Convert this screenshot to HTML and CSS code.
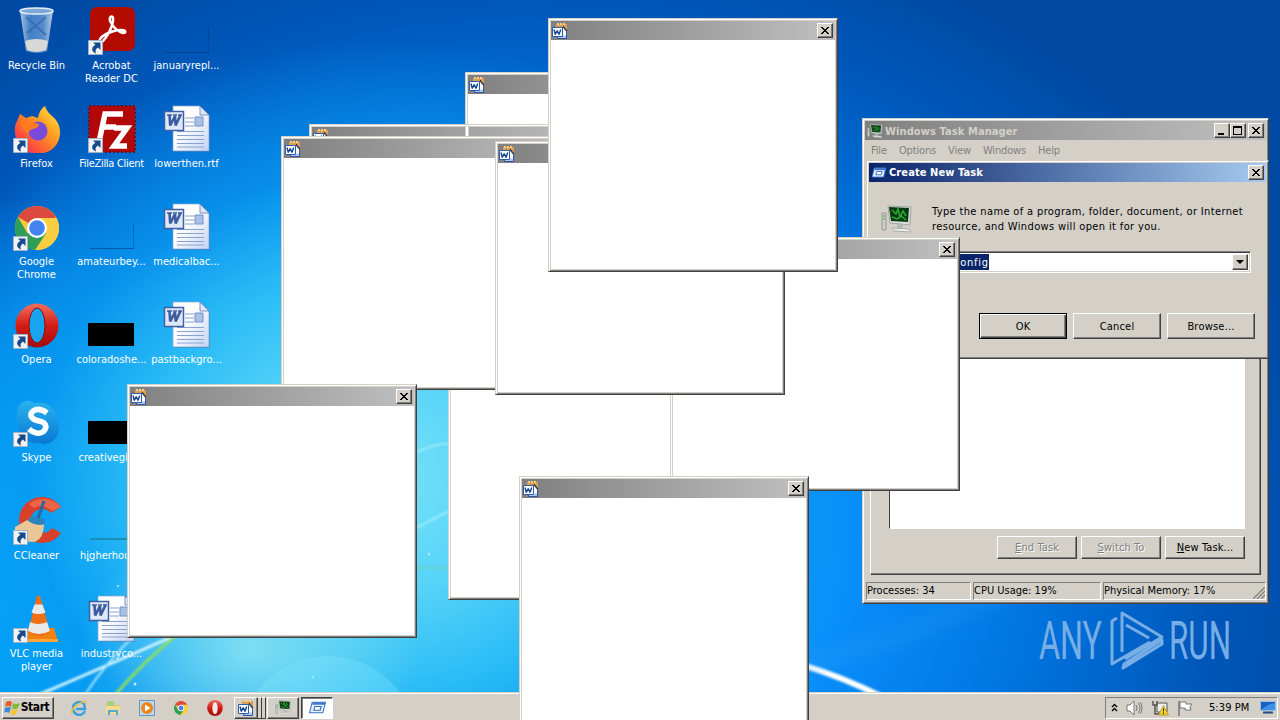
FILE: index.html
```html
<!DOCTYPE html>
<html lang="en">
<head>
    <meta charset="UTF-8">
    <meta name="viewport" content="width=device-width, initial-scale=1.0">
    <title>Desktop</title>
    <link rel="stylesheet" href="styles.css">
</head>
<body>
    <!-- shared icons -->
    <svg class="sprites">
        <defs>
            <linearGradient id="g-red" x1="0" y1="0" x2="0" y2="1"><stop offset="0" stop-color="#f2705c"/><stop offset=".5" stop-color="#d51c16"/><stop offset="1" stop-color="#a30c0c"/></linearGradient>
            <linearGradient id="g-fox" x1="1" y1="0" x2="0" y2="1"><stop offset="0" stop-color="#fff04a"/><stop offset=".4" stop-color="#ff9a1f"/><stop offset=".75" stop-color="#ff4a3d"/><stop offset="1" stop-color="#e8208a"/></linearGradient>
            <linearGradient id="g-page" x1="0" y1="0" x2="1" y2="1"><stop offset=".4" stop-color="#fff"/><stop offset="1" stop-color="#c3d3f3"/></linearGradient>
            <linearGradient id="g-bin" x1="0" y1="0" x2="1" y2="0"><stop offset="0" stop-color="#b9cfe8"/><stop offset=".3" stop-color="#4b86c9"/><stop offset=".7" stop-color="#5c93d0"/><stop offset="1" stop-color="#c8d9ea"/></linearGradient>
            <linearGradient id="g-sky" x1="0" y1="0" x2="0" y2="1"><stop offset="0" stop-color="#29b2ee"/><stop offset="1" stop-color="#0a78d4"/></linearGradient>
        </defs>
        <symbol id="shortcut" viewBox="0 0 15 15">
            <path d="M.5.5h14v14H.5z" fill="#f2f2f2" stroke="#9fb3c8"/>
            <path d="M5 2.500h7.500v7.500l-2.500-2.400c-2.500 1.500-3 3.200-2 5.900-4.500-1.500-5.500-5.800-.6-8.700z" fill="#174a8c"/>
        </symbol>
        <symbol id="doc" viewBox="0 0 48 48">
            <path d="M11 2h27l9 9v36H11z" fill="#24588f" opacity=".4"/>
            <path d="M10 1h27l9 9v36H10z" fill="url(#g-page)" stroke="#8ba4cf" stroke-width=".7"/>
            <path d="M37 1v9h9z" fill="#dde7f7" stroke="#5f7fb3" stroke-width=".8"/>
            <path d="M22 13h9M22 17h9M22 21h9M14 26.500h27M14 30.500h27M14 34.500h27M14 38.500h27M14 42h27" stroke="#8aa2d2"/>
            <path d="M32 12h8v9h-8z" fill="#a9bfe6" stroke="#7892c8"/>
            <path d="M1.500 6.500h19v19h-19z" fill="#dfe8f8" stroke="#3e5fa5" stroke-width="1.500"/>
            <path d="M4 10h5M10 10h4M15 10h4" stroke="#3d5b9f" stroke-width="1.500"/>
            <path d="M6.500 10l.7 10.500L12 11l.6 9.500L17.500 10" fill="none" stroke="#3d5b9f" stroke-width="2.600" stroke-linejoin="bevel"/>
        </symbol>
        <symbol id="word" viewBox="0 0 16 16">
            <path d="M4 1h11v13H4z" fill="#d9a055"/><path d="M5 0h2v2H5zM8 0h2v2H8zM11 0h2v2h-2z" fill="#f7cf86"/>
            <path d="M5.500 4.500h6l3 4v7h-9z" fill="#a9c6ef" stroke="#3054a0"/>
            <path d="M11 3l4 5" stroke="#1b1b1b"/>
            <path d="M.5 4.500h10v9H.5z" fill="#fff" stroke="#2f5cab"/>
            <path d="M2 6.500L3.300 11.500 5.200 7.500 7 11.500 8.700 6.500" fill="none" stroke="#16458f" stroke-width="1.400" stroke-linejoin="bevel"/>
            <path d="M11 5.500l3 3v4h-3z" fill="#fff"/>
        </symbol>
        <symbol id="close" viewBox="0 0 8 7"><path d="M0 0h2v1h1v1h2V1h1V0h2v1H7v1H6v1H5v1h1v1h1v1h1v1H6V6H5V5H3v1H2v1H0V6h1V5h1V4h1V3H2V2H1V1H0z" fill="#000"/></symbol>
        <symbol id="chrome" viewBox="0 0 44 44">
            <circle cx="22" cy="22" r="22" fill="#f8cb3e"/>
            <path d="M22 22L3 11a22 22 0 0 1 38 0z" fill="#db4a3c"/>
            <path d="M22 22l-9.500 5.500L3 11a22 22 0 0 0 17 33l11.500-17z" fill="#2e9e58"/>
            <path d="M22 12h19.500a22 22 0 0 1-21 32l11-17z" fill="#fbce42"/>
            <circle cx="22" cy="22" r="10" fill="#fff"/><circle cx="22" cy="22" r="7.800" fill="#4484ee"/>
        </symbol>
        <symbol id="opera" viewBox="0 0 44 44"><ellipse cx="22" cy="22" rx="21.500" ry="22" fill="url(#g-red)"/><ellipse cx="22" cy="22" rx="8" ry="17.500" class="opera-hole" stroke="#8b0d0d"/></symbol>
        <symbol id="computer" viewBox="0 0 32 28">
            <path d="M1 8h4v17H1z" fill="#c9cec9" stroke="#959a95"/><path d="M2 11h2M2 14h2" stroke="#4a4"/>
            <path d="M7 1l23 1-1 18-20-2z" fill="#d9ddd9" stroke="#a2a6a2"/>
            <path d="M8 2l20 1-1 14-17-1z" fill="#083b12"/>
            <path d="M11 5l4 4 2-5 2 8 3-6 3 5M11 12l5 2 4-3 5 4" fill="none" stroke="#2faa36" stroke-width="1.500"/>
            <path d="M16 19h6v4h-6z" fill="#b5bab5"/><path d="M11 23l17 1 2 3-17-1z" fill="#eceeec" stroke="#aaaeaa"/>
        </symbol>
        <symbol id="run" viewBox="0 0 16 12"><path d="M3 1h12.500L13 11H.5z" fill="#e8f1ff" stroke="#3974c8"/><path d="M3.500 1h12l-.5 2.500H3z" fill="#4078cc"/><path d="M5.500 5h6l-1 3.500h-6z" fill="#fff" stroke="#3569be"/></symbol>
    </svg>

    <div class="desktop">
        <svg class="wallpaper" viewBox="0 0 1280 720">
            <defs>
                <filter id="soft"><feGaussianBlur stdDeviation="1.300"/></filter>
                <filter id="wide"><feGaussianBlur stdDeviation="9"/></filter>
            </defs>
            <g fill="none" filter="url(#soft)">
                <path d="M36 696Q120 660 178 634" stroke="#d5f5ff" stroke-width="3"/>
                <path d="M84 696Q108 660 136 634" stroke="#a6e8fb" stroke-width="2"/>
                <path d="M115 695Q145 660 178 634" stroke="#86dd66" stroke-width="3"/>
                <path d="M800 664Q845 678 880 696" stroke="#fff" stroke-width="6"/>
                <path d="M416 452q20-9 33-8M416 528q16-8 33-17" stroke="#a9edfc" stroke-width="1.500"/>
                <path d="M416 568h33" stroke="#69d3a5" stroke-width="2" opacity=".6"/>
            </g>
            <path d="M800 665Q890 645 1010 590" stroke="#36a0fb" stroke-width="12" opacity=".35" fill="none" filter="url(#wide)"/>
            <circle cx="328" cy="745" r="89" fill="#8ae9ff" opacity=".28"/>
            <g fill="#b9f1ff"><circle cx="88" cy="560" r="1.500"/><circle cx="135" cy="684" r="1.500"/><circle cx="118" cy="586" r="1"/><circle cx="429" cy="554" r="1.200"/><circle cx="313" cy="677" r="1"/></g>
        </svg>

        <div class="icons">
            <div class="item">
                <svg class="pic" viewBox="0 0 48 48">
                    <path d="M7 4l6 40q11 4 21 0l6-40z" fill="url(#g-bin)" opacity=".9"/>
                    <ellipse cx="23.500" cy="4" rx="16.500" ry="3" fill="#7da8d6" stroke="#e3edf5" stroke-width="1.500"/>
                    <path d="M13 10l20 18M33 10L14 26" stroke="#2d5fa5" stroke-width="2" opacity=".6"/>
                    <path d="M12 34q11-4 23 0l-2 9q-10 4-19 0z" fill="#d8d9d6"/>
                </svg>
                <span>Recycle Bin</span>
            </div>
            <div class="item">
                <svg class="pic" viewBox="0 0 48 48">
                    <path d="M4 16l3-7 6 4 6-2 6 2q1-8 7-12 2 6 6 9 10 8 9 19-2 18-22 20Q4 48 2 28q-1-7 2-12z" fill="url(#g-fox)"/>
                    <circle cx="25" cy="26" r="9.500" fill="#7a4ad9"/>
                    <path d="M7 15q9 0 12 2l7 2q0 4-6 5-5 1-4 5-8-3-9-14z" fill="#ff7b20"/>
                </svg>
                <svg class="arrow"><use href="#shortcut"/></svg>
                <span>Firefox</span>
            </div>
            <div class="item">
                <svg class="pic" viewBox="0 0 48 48"><use href="#chrome" x="2" y="3" width="44" height="44"/></svg>
                <svg class="arrow"><use href="#shortcut"/></svg>
                <span>Google Chrome</span>
            </div>
            <div class="item">
                <svg class="pic" viewBox="0 0 48 48"><use href="#opera" x="2" y="2" width="44" height="45"/></svg>
                <svg class="arrow"><use href="#shortcut"/></svg>
                <span>Opera</span>
            </div>
            <div class="item">
                <svg class="pic" viewBox="0 0 48 48">
                    <path d="M12 2q6-1 9 2 20-3 23 16 5 12-2 20-7 7-15 4Q5 45 5 24 0 7 12 2z" fill="url(#g-sky)"/>
                    <path d="M34 14q-8-6-14-2c-5 5 0 9 6 10s9 5 5 10c-4 4-11 2-15-2" fill="none" stroke="#fff" stroke-width="5.500"/>
                </svg>
                <svg class="arrow"><use href="#shortcut"/></svg>
                <span>Skype</span>
            </div>
            <div class="item">
                <svg class="pic" viewBox="0 0 48 48">
                    <path d="M48 10A23 23 0 1 0 48 36l-9-5a12 12 0 1 1-1-15z" fill="#d9402a"/>
                    <path d="M48 10A23 23 0 0 0 16 7l5 4q8-5 18 3z" fill="#ec6549"/>
                    <path d="M2 30l14-8 15 5q0 14-9 18L2 44z" fill="#eac795"/>
                    <path d="M19 19l12 3 1 5q-9 3-18-4z" fill="#2c83bd"/><path d="M31 4l-6 17" stroke="#29679f" stroke-width="3"/>
                </svg>
                <svg class="arrow"><use href="#shortcut"/></svg>
                <span>CCleaner</span>
            </div>
            <div class="item">
                <svg class="pic" viewBox="0 0 48 48">
                    <path d="M13 33h28l4 14H8z" fill="#f38112"/><path d="M8 44h37v3H8z" fill="#ffa537"/>
                    <path d="M24 1h3l10 36q-10 8-22 0z" fill="#ef7014"/>
                    <path d="M21.500 9.500h8l3 8q-7 3-14 0zM17 27q8 4 17 0l3 9q-11 6-22 0z" fill="#e9e9e9"/>
                </svg>
                <svg class="arrow"><use href="#shortcut"/></svg>
                <span>VLC media player</span>
            </div>

            <div class="item">
                <svg class="pic" viewBox="0 0 48 48">
                    <rect x="2" width="45" height="44" rx="7" fill="#b30b00"/>
                    <path d="M12 32c5-7 22-11 25-8 2 4-9 2-15-10-1-5 4-7 3 0-1 8-7 17-10 20-2 2-4 0-3-2z" fill="none" stroke="#fff" stroke-width="2.500"/>
                </svg>
                <svg class="arrow"><use href="#shortcut"/></svg>
                <span>Acrobat Reader DC</span>
            </div>
            <div class="item">
                <svg class="pic" viewBox="0 0 48 48">
                    <path d="M1 1h46v46H1z" fill="#b30808" stroke="#7f0a14" stroke-width="2" stroke-dasharray="2 2"/>
                    <path d="M11 37l6-28h18M15 22h13M26 23h13L26 41h13" fill="none" stroke="#fff" stroke-width="5.500"/>
                </svg>
                <svg class="arrow"><use href="#shortcut"/></svg>
                <span class="tight">FileZilla Client</span>
            </div>
            <div class="item"><div class="pic blank"></div><span>amateurbey...</span></div>
            <div class="item"><div class="pic dark"></div><span>coloradoshe...</span></div>
            <div class="item"><div class="pic dark"></div><span>creativegift...</span></div>
            <div class="item"><div class="pic line"></div><span>higherhour...</span></div>
            <div class="item"><svg class="pic"><use href="#doc"/></svg><span>industryco...</span></div>

            <div class="item"><div class="pic blank"></div><span>januaryrepl...</span></div>
            <div class="item"><svg class="pic"><use href="#doc"/></svg><span>lowerthen.rtf</span></div>
            <div class="item"><svg class="pic"><use href="#doc"/></svg><span>medicalbac...</span></div>
            <div class="item"><svg class="pic"><use href="#doc"/></svg><span>pastbackgro...</span></div>
        </div>

        <svg class="watermark" viewBox="0 0 210 66">
            <text x="0" y="51" textLength="63" lengthAdjust="spacingAndGlyphs">ANY</text>
            <text x="130" y="51" textLength="62" lengthAdjust="spacingAndGlyphs">RUN</text>
            <path d="M78 10l-5 3v43l5-3 33-19M83 44V5l40 24-37 22M87 17l23 13M84 60l39-24v-4L85 56z" fill="none"/>
        </svg>

        <div class="taskbar">
            <div class="start">
                <svg width="17" height="16" viewBox="0 0 17 16"><path d="M2 2q3-2 6 0L7 7Q4 5 1 7z" fill="#e5602b"/><path d="M9 3q3 2 7 0l-2 5q-3 2-6 0z" fill="#7fbc3b"/><path d="M1 8q3-2 6 0l-2 5q-3-2-5 0z" fill="#3c8ad7"/><path d="M8 9q3 2 6 0l-2 5q-3 2-6 0z" fill="#f7c531"/></svg>
                Start
            </div>
            <div class="quick">
                <svg viewBox="0 0 16 16"><path d="M14 11q-2 4-6 4-6-1-6-7 0-5 6-6 6 0 6 7H5" fill="none" stroke="#3a9fdc" stroke-width="2.600"/><path d="M1 14Q-1 9 8 4t7-1" fill="none" stroke="#eac34c" stroke-width="1.500"/></svg>
                <svg viewBox="0 0 16 16"><path d="M1 3h5l1 2h8v9H1z" fill="#e9c25f"/><path d="M2 1h7v5H2z" fill="#a5cf86"/><path d="M1 6h14v8H1z" fill="#f5dc8c"/><path d="M3 15v-5h10v5h-2v-3H5v3z" fill="#58a7d9"/></svg>
                <svg viewBox="0 0 16 16"><path d="M.5.5h15v15H.5z" fill="#bcd9ee" stroke="#6098c3"/><circle cx="8" cy="8" r="6" fill="#ee8519"/><path d="M6 4.500l5.500 3.500L6 11.500z" fill="#fff"/></svg>
                <svg><use href="#chrome" x="1" y="1" width="14" height="14"/></svg>
                <svg><use href="#opera"/></svg>
            </div>
            <div class="task grouped"><svg width="16" height="16"><use href="#word"/></svg></div>
            <div class="stack"><i></i><i></i></div>
            <div class="task"><svg width="17" height="15"><use href="#computer"/></svg></div>
            <div class="task active"><svg width="17" height="13"><use href="#run"/></svg></div>
            <div class="tray">
                <svg width="7" height="10" viewBox="0 0 7 10"><path d="M1 4l2.500-2.500L6 4M1 8l2.500-2.500L6 8" fill="none" stroke="#000" stroke-width="1.400"/></svg>
                <svg width="17" height="16" viewBox="0 0 17 16"><path d="M1 5h3l4-4v14l-4-4H1z" fill="#fff" stroke="#777"/><path d="M10 5q2 3 0 6M12 3q4 5 0 10M14 2q4 6 0 12" fill="none" stroke="#777"/></svg>
                <svg width="17" height="16" viewBox="0 0 17 16"><path d="M5 3h10v9H5z" fill="#eee" stroke="#555"/><path d="M1 1v4h4V1M3 5v9h5" fill="none" stroke="#555" stroke-width="1.500"/><path d="M11.500 5.500L16.500 15h-10z" fill="#f7cf22" stroke="#a88a10" stroke-width=".7"/><path d="M11.500 8.500v3M11.500 12.500v1.500" stroke="#222"/></svg>
                <svg width="16" height="16" viewBox="0 0 16 16"><path d="M2 1v15" stroke="#777" stroke-width="1.500"/><path d="M3 2h6v2h6l-2 3 1 3H8V8H3z" fill="#fff" stroke="#777"/></svg>
                <span>5:39 PM</span>
                <svg width="16" height="13" viewBox="0 0 16 13"><path d="M.5.500h15v9H.5z" fill="#175fc0" stroke="#9dbfe8"/><path d="M1 9Q7 3 15 2v7z" fill="#3b91e5"/><path d="M3 10.500h10v2H3z" fill="#244c82"/></svg>
            </div>
        </div>

        <div class="window manager">
            <div class="titlebar">
                <svg class="app" width="16" height="14"><use href="#computer"/></svg>
                <b>Windows Task Manager</b>
                <div class="btn min"></div><div class="btn max"><i></i></div><div class="btn x"><svg><use href="#close"/></svg></div>
            </div>
            <div class="menu"><span>File</span><span>Options</span><span>View</span><span>Windows</span><span>Help</span></div>
            <div class="panel">
                <div class="list"></div>
                <div class="actions">
                    <div class="button off"><u>E</u>nd Task</div>
                    <div class="button off"><u>S</u>witch To</div>
                    <div class="button"><u>N</u>ew Task...</div>
                </div>
            </div>
            <div class="status">
                <div>Processes: 34</div><div>CPU Usage: 19%</div><div>Physical Memory: 17%</div>
                <svg class="grip" viewBox="0 0 12 12"><path d="M0 12L12 0M4 12l8-8M8 12l4-4" stroke="#808080" stroke-width="1.300"/></svg>
            </div>
        </div>

        <div class="window dialog">
            <div class="titlebar">
                <svg class="app" width="16" height="11"><use href="#run"/></svg>
                <b>Create New Task</b>
                <div class="btn x"><svg><use href="#close"/></svg></div>
            </div>
            <div class="prompt">
                <svg width="32" height="28"><use href="#computer"/></svg>
                <p>Type the name of a program, folder, document, or Internet<br>resource, and Windows will open it for you.</p>
            </div>
            <div class="combo"><span>msconfig</span><div class="drop"><i></i></div></div>
            <div class="actions">
                <div class="button default">OK</div><div class="button">Cancel</div><div class="button">Browse...</div>
            </div>
        </div>

        <div class="window popup w1"><div class="titlebar"><svg class="app"><use href="#word"/></svg><div class="btn x"><svg><use href="#close"/></svg></div></div></div>
        <div class="window popup w2"><div class="titlebar"><svg class="app"><use href="#word"/></svg><div class="btn x"><svg><use href="#close"/></svg></div></div></div>
        <div class="window popup w3"><div class="titlebar"><svg class="app"><use href="#word"/></svg><div class="btn x"><svg><use href="#close"/></svg></div></div></div>
        <div class="edge"></div>
        <div class="window popup w4"><div class="titlebar"><svg class="app"><use href="#word"/></svg><div class="btn x"><svg><use href="#close"/></svg></div></div></div>
        <div class="window popup w5"><div class="titlebar"><svg class="app"><use href="#word"/></svg><div class="btn x"><svg><use href="#close"/></svg></div></div></div>
        <div class="window popup w6"><div class="titlebar"><svg class="app"><use href="#word"/></svg><div class="btn x"><svg><use href="#close"/></svg></div></div></div>
        <div class="window popup w7"><div class="titlebar"><svg class="app"><use href="#word"/></svg><div class="btn x"><svg><use href="#close"/></svg></div></div></div>
        <div class="window popup w8"><div class="titlebar"><svg class="app"><use href="#word"/></svg><div class="btn x"><svg><use href="#close"/></svg></div></div></div>
        <div class="window popup w9"><div class="titlebar"><svg class="app"><use href="#word"/></svg><div class="btn x"><svg><use href="#close"/></svg></div></div></div>
    </div>
</body>
</html>
```
FILE: styles.css
```css
* {
    box-sizing: border-box;
}

body {
    margin: 0;
    font-family: "DejaVu Sans Condensed", "DejaVu Sans", sans-serif;
    font-stretch: condensed;
    font-size: 11px;
    line-height: 13px;
    letter-spacing: -0.1px;
    color: #000;
}

svg {
    display: block;
    flex: none;
}

.sprites {
    position: absolute;
    width: 0;
    height: 0;
}

.desktop {
    position: relative;
    width: 1280px;
    height: 720px;
    overflow: hidden;
    display: flex;
    flex-direction: column;
    background:
        radial-gradient(ellipse 170px 130px at 250px 650px, rgba(160, 235, 240, 0.7), transparent),
        radial-gradient(ellipse 500px 440px at 380px 480px, #78e2f8 0%, #58d4f8 25%, #2abcf6 48%, rgba(10, 155, 240, 0.7) 70%, transparent 100%),
        radial-gradient(ellipse 300px 400px at 0 600px, #00a4fc 0%, #009cf6 40%, transparent 100%),
        radial-gradient(ellipse 820px 660px at 520px 560px, #0a98ff 0%, #0a90fc 38%, #0078e4 60%, #0058ba 84%, #004aa4 100%);
}

.wallpaper {
    position: absolute;
    width: 1280px;
    height: 720px;
}

/* desktop icons */
.icons {
    position: relative;
    flex: 1;
    display: grid;
    grid-template-columns: repeat(3, 75px);
    grid-template-rows: repeat(7, 98px);
    grid-auto-flow: column;
    margin-left: -1px;
}

.item {
    position: relative;
    display: flex;
    flex-direction: column;
    align-items: center;
    padding-top: 7px;
    color: #fff;
    text-align: center;
    letter-spacing: 0.02px;
}

.item span {
    width: 73px;
    display: flex;
    justify-content: center;
}

.item .tight {
    letter-spacing: -0.3px;
}

.pic {
    width: 48px;
    height: 48px;
    margin-bottom: 4px;
    flex: none;
}

.item .arrow {
    position: absolute;
    left: 14px;
    top: 40px;
    width: 15px;
    height: 15px;
}

.opera-hole {
    fill: var(--hole, #18a4ee);
}

.quick {
    --hole: #f5e9e6;
}

.blank {
    width: 44px;
    height: 26px;
    margin: 20px 0 6px;
    border-right: 1px solid rgba(0, 50, 110, 0.35);
    border-bottom: 1px solid rgba(0, 50, 110, 0.5);
}

.dark {
    width: 46px;
    height: 23px;
    margin: 22px 2px 7px 0;
    background: #000;
}

.line {
    width: 44px;
    height: 2px;
    margin: 41px 0 9px;
    background: #1a8fb5;
}

.watermark {
    position: absolute;
    left: 1039px;
    top: 608px;
    width: 210px;
    height: 66px;
    overflow: visible;
    fill: #78aee6;
    font: 400 53px Roboto, sans-serif;
    letter-spacing: 0;
}

.watermark path {
    stroke: #78aee6;
    stroke-width: 3;
    stroke-linejoin: round;
}

/* windows */
.window {
    position: absolute;
    background: #d4d0c8;
    border: 1px solid;
    border-color: #d4d0c8 #404040 #404040 #d4d0c8;
    box-shadow: inset 1px 1px #fff, inset -1px -1px #808080;
    padding: 2px;
    display: flex;
    flex-direction: column;
}

.titlebar {
    height: 19px;
    flex: none;
    display: flex;
    align-items: center;
    padding: 0 2px;
    background: linear-gradient(90deg, #808080, #c0c0c0);
}

.titlebar b {
    flex: 1;
    margin-left: 2px;
    padding-top: 1px;
    color: #d4d0c8;
    letter-spacing: 0.1px;
}

.btn {
    width: 16px;
    height: 15px;
    background: #d4d0c8;
    border: 1px solid;
    border-color: #fff #404040 #404040 #fff;
    box-shadow: inset -1px -1px #808080;
    display: flex;
    padding: 3px 0 0 3px;
}

.btn svg {
    width: 8px;
    height: 7px;
}

.btn.min::after {
    content: "";
    width: 6px;
    height: 2px;
    margin-top: 6px;
    background: #000;
}

.btn.max i {
    width: 9px;
    height: 9px;
    margin: -1px 0 0 -1px;
    border: 1px solid #000;
    border-top-width: 2px;
}

.btn.x {
    margin-left: 2px;
}

.button {
    height: 23px;
    border: 1px solid;
    border-color: #fff #404040 #404040 #fff;
    box-shadow: inset -1px -1px #808080;
    display: flex;
    align-items: center;
    justify-content: center;
    white-space: pre;
    letter-spacing: 0.1px;
}

.button.off {
    color: #808080;
    text-shadow: 1px 1px #fff;
}

.manager {
    left: 862px;
    top: 118px;
    width: 407px;
    height: 486px;
}

.menu {
    height: 20px;
    flex: none;
    display: flex;
    align-items: center;
    gap: 12px;
    padding-left: 6px;
    color: #808080;
    letter-spacing: -0.15px;
}

.panel {
    flex: 1;
    margin: 10px 5px 7px;
    border: 1px solid;
    border-color: #fff #404040 #404040 #fff;
    box-shadow: inset -1px -1px #808080;
    padding: 14px 15px 15px 18px;
    display: flex;
    flex-direction: column;
    gap: 7px;
}

.list {
    flex: 1;
    background: #fff;
    border: 1px solid;
    border-color: #404040 #fff #fff #404040;
    outline: 1px solid #d4d0c8;
}

.actions {
    display: flex;
    justify-content: flex-end;
    gap: 4px;
}

.manager .button {
    width: 80px;
}

.status {
    position: relative;
    height: 18px;
    margin: 0 0 1px 1px;
    flex: none;
    display: flex;
    gap: 2px;
    letter-spacing: 0;
}

.status div {
    border: 1px solid;
    border-color: #808080 #fff #fff #808080;
    padding: 1px 0;
    width: 105px;
}

.status div:nth-child(2) {
    width: 128px;
}

.status div:nth-child(3) {
    flex: 1;
}

.grip {
    position: absolute;
    right: 1px;
    bottom: 1px;
    width: 12px;
    height: 12px;
}

.dialog {
    left: 866px;
    top: 160px;
    width: 403px;
    height: 199px;
}

.dialog .titlebar {
    background: linear-gradient(90deg, #0a246a, #a6caf0);
}

.dialog .titlebar b {
    padding-top: 0;
    color: #fff;
}

.prompt {
    display: flex;
    gap: 19px;
    padding: 22px 0 0 12px;
    height: 69px;
}

.prompt svg {
    margin-top: 1px;
}

.prompt p {
    margin: 0;
    line-height: 15px;
    white-space: nowrap;
    letter-spacing: 0.36px;
}

.combo {
    height: 22px;
    margin: 0 15px 0 62px;
    background: #fff;
    border: 1px solid;
    border-color: #808080 #fff #fff #808080;
    box-shadow: inset 1px 1px #404040, inset -1px -1px #d4d0c8;
    display: flex;
    justify-content: space-between;
    padding: 2px;
}

.combo span {
    background: #0a246a;
    color: #fff;
    margin-left: 4px;
    padding: 2px 0 0;
    letter-spacing: 0.7px;
}

.drop {
    width: 16px;
    background: #d4d0c8;
    border: 1px solid;
    border-color: #fff #404040 #404040 #fff;
    box-shadow: inset -1px -1px #808080;
    display: flex;
    justify-content: center;
    align-items: center;
}

.drop i {
    border: 4px solid transparent;
    border-top-color: #000;
    border-bottom: 0;
}

.dialog .actions {
    gap: 6px;
    margin: 40px 11px 0 0;
}

.dialog .button {
    width: 88px;
    height: 26px;
    letter-spacing: 0.2px;
}

.dialog .default {
    border: 1px solid #000;
    box-shadow: inset 1px 1px #fff, inset -1px -1px #404040, inset -2px -2px #808080;
}

.popup {
    width: 290px;
    height: 254px;
}

.popup::after {
    content: "";
    flex: 1;
    background: #fff;
}

.popup .titlebar {
    justify-content: space-between;
    padding-left: 1px;
}

.popup .app {
    width: 16px;
    height: 16px;
}

.w1 { left: 448px; top: 346px; }
.w2 { left: 465px; top: 72px; }
.w3 { left: 309px; top: 124px; }
.w4 { left: 281px; top: 136px; }
.w5 { left: 670px; top: 237px; }
.w6 { left: 495px; top: 141px; }
.w7 { left: 548px; top: 18px; }
.w8 { left: 127px; top: 384px; }
.w9 { left: 519px; top: 476px; }

.edge {
    position: absolute;
    left: 465px;
    top: 125px;
    width: 4px;
    height: 12px;
    background: #fff;
    border: 1px solid #d4d0c8;
    border-width: 0 1px;
}

/* taskbar */
.taskbar {
    position: relative;
    height: 28px;
    background: #d4d0c8;
    border-top: 1px solid #d4d0c8;
    box-shadow: inset 0 1px #fff;
    display: flex;
    align-items: center;
    padding: 2px 2px 0;
}

.start,
.task {
    height: 22px;
    border: 1px solid;
    border-color: #fff #404040 #404040 #fff;
    box-shadow: inset -1px -1px #808080;
    display: flex;
    align-items: center;
    justify-content: center;
}

.start {
    width: 52px;
    padding-right: 3px;
    font-weight: bold;
    font-size: 12px;
    letter-spacing: -0.4px;
}

.quick {
    display: flex;
    gap: 18px;
    margin: 0 11px 0 17px;
}

.quick svg {
    width: 16px;
    height: 16px;
}

.task {
    width: 32px;
    margin-right: 2px;
}

.grouped {
    width: 24px;
    margin-right: 0;
}

.stack {
    display: flex;
    margin-right: 1px;
}

.stack i {
    width: 4px;
    height: 22px;
    border-right: 1px solid #404040;
    border-top: 1px solid #fff;
    border-bottom: 1px solid #404040;
}

.task.active {
    background: #fff;
    border-color: #404040 #fff #fff #404040;
    box-shadow: inset 1px 1px #808080;
}

.tray {
    margin-left: auto;
    width: 173px;
    height: 22px;
    border: 1px solid;
    border-color: #808080 #fff #fff #808080;
    display: flex;
    align-items: center;
    justify-content: space-between;
    padding: 0 1px 0 5px;
}

.tray span {
    margin: 0 2px 0 7px;
    letter-spacing: 0.1px;
}
```
